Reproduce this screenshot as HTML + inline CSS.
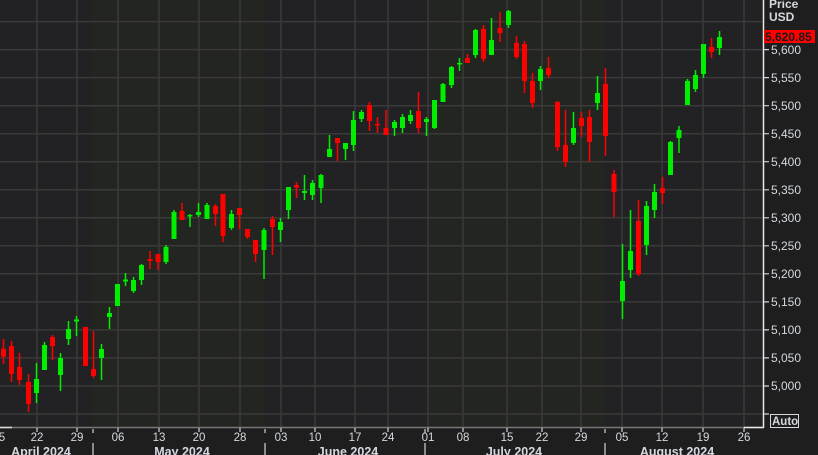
<!DOCTYPE html>
<html><head><meta charset="utf-8"><style>
html,body{margin:0;padding:0;background:#1e1e1f;width:818px;height:455px;overflow:hidden}
svg{display:block;font-family:"Liberation Sans",sans-serif}
</style></head><body>
<svg width="818" height="455" viewBox="0 0 818 455" xmlns="http://www.w3.org/2000/svg">
<rect x="0" y="0" width="818" height="455" fill="#1e1e1f"/>
<rect x="0" y="0" width="763" height="427" fill="#222224"/>
<rect x="93" y="0" width="172" height="427" fill="#232521"/>
<rect x="430" y="0" width="174" height="427" fill="#232521"/>
<g stroke="#3a3a3a" stroke-width="1.5">
<path d="M0 21.6H763M0 49.6H763M0 77.6H763M0 105.7H763M0 133.7H763M0 161.7H763M0 189.8H763M0 217.8H763M0 245.8H763M0 273.8H763M0 301.9H763M0 329.9H763M0 357.9H763M0 386H763M0 414H763"/>
<path d="M37 0V427M77 0V427M118 0V427M159 0V427M199 0V427M240 0V427M281 0V427M315 0V427M355 0V427M388 0V427M428 0V427M463 0V427M507 0V427M542 0V427M581 0V427M622 0V427M662 0V427M703 0V427M744 0V427"/>
</g>
<g stroke="#ff0000" stroke-width="1.5" fill="none">
<path d="M3.5 339V364M11.5 341V382M19.5 353V385M28.5 374V412M52.5 335V360M85.5 327V366M93.5 331V378M150 251V269M158 254V270M182 203V220M215.5 204V226M223 194V242M239.5 208V229M247.5 229V239M255.5 240V262M272.5 216V255M296.5 182V198M337.5 138V161M369.5 102V131M377.5 117V133M386 110V135M418.5 92V133M467.5 54V63M483.5 25V62M500 12V42M516.5 36V59M524.5 41V93M532.5 73V108M548.5 57V78M557.5 101V151M565.5 110V167M581.5 112V137M589.5 110V162M605.5 68V156M614 170V217M638.5 200V276M662.5 177V204M711.5 38V58"/>
</g>
<g fill="#ff0000">
<rect x="1" y="348.7" width="5" height="8"/><rect x="9" y="346" width="5" height="28"/><rect x="17" y="367" width="5" height="13"/><rect x="26" y="382" width="5" height="22"/><rect x="50" y="337" width="5" height="9"/><rect x="83" y="327" width="5" height="39"/><rect x="91" y="369" width="5" height="7"/><rect x="147.5" y="259" width="5" height="2"/><rect x="155.5" y="254" width="5" height="8"/><rect x="179.5" y="211" width="5" height="9"/><rect x="213" y="206" width="5" height="8"/><rect x="220.5" y="194" width="5" height="42"/><rect x="237" y="208" width="5" height="7"/><rect x="245" y="229" width="5" height="8"/><rect x="253" y="240" width="5" height="14"/><rect x="270" y="219" width="5" height="8"/><rect x="294" y="185" width="5" height="2.5"/><rect x="335" y="138" width="5" height="5"/><rect x="367" y="105" width="5" height="16"/><rect x="375" y="124" width="5" height="1.5"/><rect x="383.5" y="128" width="5" height="7"/><rect x="416" y="111" width="5" height="17"/><rect x="465" y="58" width="5" height="5"/><rect x="481" y="29" width="5" height="30"/><rect x="497.5" y="28" width="5" height="5"/><rect x="514" y="43" width="5" height="14"/><rect x="522" y="44" width="5" height="37"/><rect x="530" y="81" width="5" height="22"/><rect x="546" y="68" width="5" height="7"/><rect x="555" y="102" width="5" height="45"/><rect x="563" y="145" width="5" height="17"/><rect x="579" y="118" width="5" height="8"/><rect x="587" y="117" width="5" height="25"/><rect x="603" y="84" width="5" height="52"/><rect x="611.5" y="174" width="5" height="18"/><rect x="636" y="221" width="5" height="53"/><rect x="660" y="188" width="5" height="5"/><rect x="709" y="47" width="5" height="5"/>
</g>
<g stroke="#00ee00" stroke-width="1.5" fill="none">
<path d="M36.5 363V403M44.5 342V370M60.5 353V391M68.5 321V345M76.5 316V336M101.5 344V380M109.5 307V329M117.5 284V306M125.5 273V286M133.5 277V293M141.5 264V285M166 245V264M174 210V239M190 214V227M198.5 203V217M207 203V219M231.5 210V230M264 228V279M280.5 218V242M288.5 187V219M304.5 175V200M312.5 180V200M321 174V203M329.5 135V157M345.5 143V160M353.5 111V151M361.5 110V122M394.5 120V136M402.5 114V133M410.5 110V124M426.5 117V136M434.5 100V129M443 83V102M451.5 66V88M459.5 58V71M475.5 29V58M491.5 18V55M508.5 10V28M540.5 66V90M573.5 112V145M597.5 76V110M622.5 244V319M630.5 210V278M646.5 201V255M654.5 184V218M670.5 141V175M679 126V153M687.5 79V105M695.5 70V92M703.5 44V78M719.5 31V55"/>
</g>
<g fill="#00ee00">
<rect x="34" y="379" width="5" height="14"/><rect x="42" y="345" width="5" height="25"/><rect x="58" y="358" width="5" height="17"/><rect x="66" y="329" width="5" height="10"/><rect x="74" y="319.5" width="5" height="2"/><rect x="99" y="349" width="5" height="9"/><rect x="107" y="313" width="5" height="4"/><rect x="115" y="284" width="5" height="22"/><rect x="123" y="279.5" width="5" height="2"/><rect x="131" y="280" width="5" height="11"/><rect x="139" y="265" width="5" height="15"/><rect x="163.5" y="247" width="5" height="15"/><rect x="171.5" y="212" width="5" height="27"/><rect x="187.5" y="215" width="5" height="1.5"/><rect x="196" y="212" width="5" height="3"/><rect x="204.5" y="205" width="5" height="14"/><rect x="229" y="214" width="5" height="14"/><rect x="261.5" y="230" width="5" height="20"/><rect x="278" y="222" width="5" height="8"/><rect x="286" y="187" width="5" height="23"/><rect x="302" y="191" width="5" height="2"/><rect x="310" y="183" width="5" height="12"/><rect x="318.5" y="175" width="5" height="13"/><rect x="327" y="149" width="5" height="8"/><rect x="343" y="143" width="5" height="6"/><rect x="351" y="120" width="5" height="25"/><rect x="359" y="112" width="5" height="7"/><rect x="392" y="122" width="5" height="6"/><rect x="400" y="117" width="5" height="11"/><rect x="408" y="115" width="5" height="6"/><rect x="424" y="119" width="5" height="3"/><rect x="432" y="100" width="5" height="28"/><rect x="440.5" y="84" width="5" height="18"/><rect x="449" y="67" width="5" height="18"/><rect x="457" y="63" width="5" height="1.5"/><rect x="473" y="30" width="5" height="25"/><rect x="489" y="40" width="5" height="15"/><rect x="506" y="11" width="5" height="14"/><rect x="538" y="69" width="5" height="12"/><rect x="571" y="128" width="5" height="15"/><rect x="595" y="93" width="5" height="10"/><rect x="620" y="281" width="5" height="20"/><rect x="628" y="251" width="5" height="19"/><rect x="644" y="206" width="5" height="39"/><rect x="652" y="192" width="5" height="18"/><rect x="668" y="142" width="5" height="33"/><rect x="676.5" y="130" width="5" height="8"/><rect x="685" y="81" width="5" height="24"/><rect x="693" y="75" width="5" height="14"/><rect x="701" y="44" width="5" height="30"/><rect x="717" y="37" width="5" height="11"/>
</g>
<path d="M0 427.5H763" stroke="#777" stroke-width="1.5"/>
<path d="M0 427.5H12" stroke="#ddd" stroke-width="1.5"/>
<path d="M763.5 0V428M744 427.5H764" stroke="#e8e8e8" stroke-width="1.5"/>
<g stroke="#cfd4da" stroke-width="1.2">
<path d="M764 49.6H769M764 77.6H769M764 105.7H769M764 133.7H769M764 161.7H769M764 189.8H769M764 217.8H769M764 245.8H769M764 273.8H769M764 301.9H769M764 329.9H769M764 357.9H769M764 386H769M764 414H769"/>
<path d="M37 428V432M77 428V432M118 428V432M159 428V432M199 428V432M240 428V432M281 428V432M315 428V432M355 428V432M388 428V432M428 428V432M463 428V432M507 428V432M542 428V432M581 428V432M622 428V432M662 428V432M703 428V432M744 428V432"/>
<path d="M93 429V433M93 443V455M265 429V433M265 443V455M425 429V433M425 443V455M605 429V433M605 443V455"/>
</g>
<g fill="#d4d9df" font-size="12">
<text x="769" y="8" font-weight="bold">Price</text>
<text x="769" y="21" font-weight="bold">USD</text>
<text x="771" y="54">5,600</text><text x="771" y="82">5,550</text><text x="771" y="110">5,500</text><text x="771" y="138">5,450</text><text x="771" y="166">5,400</text><text x="771" y="194">5,350</text><text x="771" y="222">5,300</text><text x="771" y="250">5,250</text><text x="771" y="278">5,200</text><text x="771" y="306">5,150</text><text x="771" y="334">5,100</text><text x="771" y="362">5,050</text><text x="771" y="390">5,000</text>
</g>
<rect x="764" y="30" width="51" height="13" fill="#ff0000"/>
<text x="765" y="41" fill="#1a1a1a" font-size="12" font-weight="bold">5,620.85</text>
<rect x="770.5" y="414.5" width="28" height="13" fill="none" stroke="#d4d9df"/>
<text x="772" y="425" fill="#d4d9df" font-size="11.5" font-weight="bold">Auto</text>
<g fill="#d4d9df" font-size="11.5" text-anchor="middle">
<text x="2" y="441">5</text><text x="37" y="441">22</text><text x="77" y="441">29</text><text x="118" y="441">06</text><text x="159" y="441">13</text><text x="199" y="441">20</text><text x="240" y="441">28</text><text x="281" y="441">03</text><text x="315" y="441">10</text><text x="355" y="441">17</text><text x="388" y="441">24</text><text x="428" y="441">01</text><text x="463" y="441">08</text><text x="507" y="441">15</text><text x="542" y="441">22</text><text x="581" y="441">29</text><text x="622" y="441">05</text><text x="662" y="441">12</text><text x="703" y="441">19</text><text x="744" y="441">26</text>
</g>
<g fill="#d4d9df" font-size="12.5" font-weight="bold" text-anchor="middle">
<text x="41" y="456">April 2024</text><text x="182" y="456">May 2024</text><text x="348" y="456">June 2024</text><text x="514" y="456">July 2024</text><text x="677" y="456">August 2024</text>
</g>
</svg>
</body></html>
